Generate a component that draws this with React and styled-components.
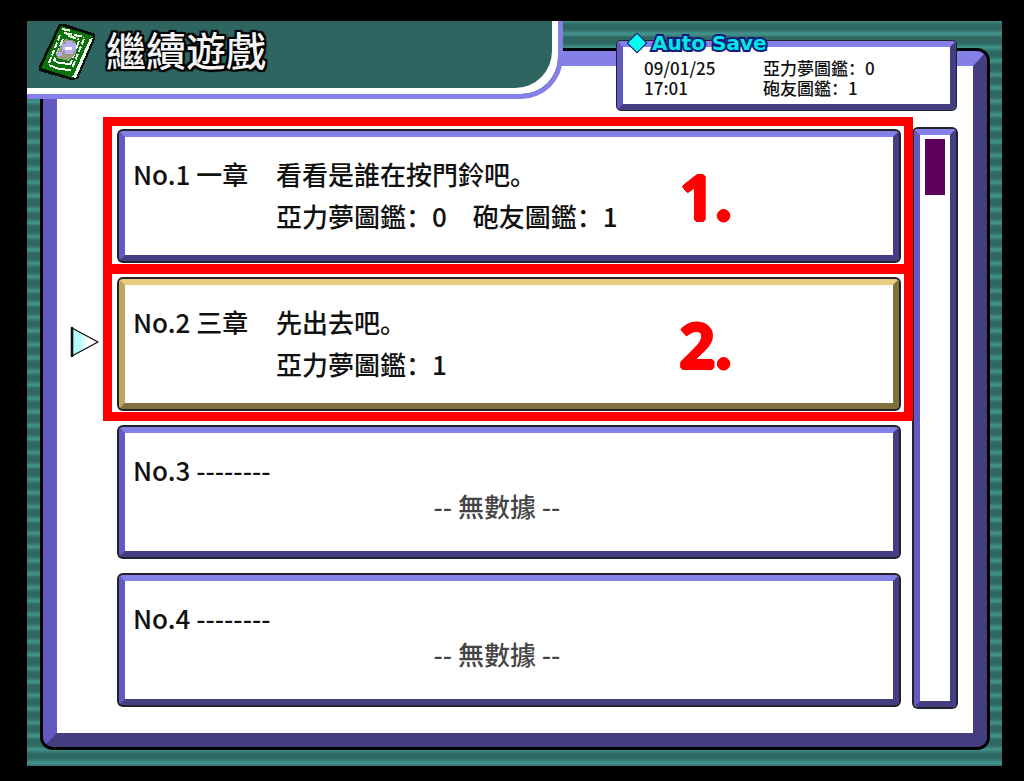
import React from "react";
import styled, { createGlobalStyle, css } from "styled-components";

const saves = [
  {
    no: 1,
    chapter: "一章",
    line: "看看是誰在按門鈴吧。",
    counts: "亞力夢圖鑑：0　砲友圖鑑：1",
    mark: "1.",
  },
  {
    no: 2,
    chapter: "三章",
    line: "先出去吧。",
    counts: "亞力夢圖鑑：1",
    mark: "2.",
    selected: true,
  },
  { no: 3 },
  { no: 4 },
];

const BookIcon = () => (
  <svg width="56" height="58" viewBox="0 0 56 58" shapeRendering="crispEdges" aria-hidden="true">
    <path d="M20 1 L26 1 L56 11 L56 16 L39 56 L32 57 L0 48 L0 43 Z" fill="#061006" />
    <path d="M22 3 L54 13 L34 55 L2 45 Z" fill="#0c720c" />
    <path d="M50 16 L54 15 L37 55 L33 54 Z" fill="#f2f8f2" />
    <path d="M50 15 L33 53" stroke="#0c720c" strokeWidth="2" />
    <path d="M23 6 L33 8 M25 10 L45 14 M29 13 L40 16" stroke="#f2f6e8" strokeWidth="2" strokeDasharray="8 2" />
    <path d="M21 12 L10 40 M45 16 L33 45" stroke="#f2f8f2" strokeWidth="2" strokeDasharray="6 2" />
    <path d="M24 16 L15 38 M40 18 L31 42" stroke="#f2f8f2" strokeWidth="2" strokeDasharray="8 2" />
    <path d="M10 42 L20 46 L32 47 M14 37 L20 40 L31 41" fill="none" stroke="#f2f8f2" strokeWidth="2" />
    <path d="M26 16 L36 18 L37 30 L30 38 L18 35 L17 31 Z" fill="#9a9a7c" />
    <path d="M27 18 h6 v2 h4 v8 h-3 v3 h-8 v-3 h-3 v-7 h4 Z" fill="#b5adf0" />
    <path d="M18 29 h5 v4 h-5 Z" fill="#b5adf0" />
    <path d="M26 24 h7 v3 h-7 Z" fill="#ffffff" />
  </svg>
);

const App = () => {
  return (
    <Page>
      <GlobalStyle />
      <Screen>
        <Panel>
          <SaveList>
            {saves.map((save) => (
              <li key={save.no}>
                <Slot $selected={save.selected}>
                  {save.selected && (
                    <Cursor width="30" height="32" viewBox="0 0 30 32" aria-hidden="true">
                      <defs>
                        <linearGradient id="cursor">
                          <stop offset="0.3" stopColor="#b4fbff" />
                          <stop offset="0.6" stopColor="#ffffff" />
                        </linearGradient>
                      </defs>
                      <path d="M2 2 L28 16 L2 30 Z" fill="url(#cursor)" stroke="#111" strokeWidth="1.4" strokeLinejoin="round" />
                      <path d="M2 2 V30" stroke="#111" strokeWidth="2.6" strokeLinecap="round" />
                    </Cursor>
                  )}
                  <SlotNumber>
                    No.{save.no} {save.chapter || "--------"}
                  </SlotNumber>
                  {save.chapter ? (
                    <Detail>
                      <span>{save.line}</span>
                      <span>{save.counts}</span>
                    </Detail>
                  ) : (
                    <NoData>-- 無數據 --</NoData>
                  )}
                  {save.mark && <Mark>{save.mark}</Mark>}
                </Slot>
              </li>
            ))}
          </SaveList>
          <ScrollTrack>
            <ScrollThumb />
          </ScrollTrack>
        </Panel>
        <Header>
          <BookIcon />
          <Title>繼續遊戲</Title>
        </Header>
        <AutoSave>
          <AutoSaveLabel>
            <svg width="22" height="22" viewBox="0 0 22 22" aria-hidden="true">
              <path d="M11 2 L20 11 L11 20 L2 11 Z" fill="#00ffee" stroke="#151a80" strokeWidth="2.4" strokeLinejoin="round" />
            </svg>
            Auto Save
          </AutoSaveLabel>
          <AutoSaveRow>
            <span>09/01/25</span>
            <span>亞力夢圖鑑：0</span>
          </AutoSaveRow>
          <AutoSaveRow>
            <span>17:01</span>
            <span>砲友圖鑑：1</span>
          </AutoSaveRow>
        </AutoSave>
      </Screen>
    </Page>
  );
};

export default App;

// Styled Components
const GlobalStyle = createGlobalStyle`
  * {
    box-sizing: border-box;
  }

  body {
    margin: 0;
    background: #000;
    font-family: "Noto Sans CJK SC", "Noto Sans CJK TC", sans-serif;
    font-weight: 500;
    color: #111;
  }
`;

// light top, mid left, dark right and bottom
const bevel = css`
  border-style: solid;
  border-color: #8580e8 #423e80 #423e80 #625ac0;
`;

const Page = styled.div`
  display: grid;
  min-height: 100vh;
  padding: 21px 22px 15px 27px;
`;

const Screen = styled.main`
  display: grid;
  background: repeating-linear-gradient(
    #40908a 0px,
    #36776f 2px,
    #2f6762 4px,
    #2f6762 8px,
    #36776f 10px,
    #40908a 12px,
    #40908a 14px,
    #36776f 15px,
    #2f6762 17px,
    #2f6762 22px,
    #36776f 24px,
    #40908a 26px,
    #40908a 27px
  );
`;

const Panel = styled.section`
  ${bevel}
  grid-area: 1 / 1;
  display: grid;
  grid-template-columns: 1fr 46px;
  gap: 11px;
  margin: 30px 15px 19px 16px;
  padding: 61px 15px 24px 60px;
  border-width: 15px 14px 14px;
  border-radius: 10px;
  background: #fff;
  box-shadow: 0 0 0 3px #000;
`;

const SaveList = styled.ul`
  display: grid;
  grid-auto-rows: 1fr;
  gap: 14px;
  margin: 0;
  padding: 2px 0;
  list-style: none;

  li {
    display: grid;
  }
`;

const Slot = styled.button`
  ${bevel}
  position: relative;
  display: grid;
  grid-template-columns: 143px 1fr;
  align-content: start;
  margin: 2px;
  padding: 16px 8px 18px;
  border-width: 6px;
  border-radius: 4px;
  background: #fff;
  box-shadow: 0 0 0 2px #22222c;
  color: inherit;
  font: inherit;
  font-size: 26px;
  line-height: 42px;
  text-align: left;
  cursor: pointer;
  ${(props) =>
    props.$selected && "border-color: #e8cc80 #80703e #80703e #c0a660;"}
`;

const SlotNumber = styled.span`
  white-space: nowrap;
`;

const Detail = styled.span`
  display: grid;
`;

const NoData = styled.span`
  grid-column: 1 / -1;
  padding-right: 24px;
  color: #444;
  line-height: 30px;
  text-align: center;
`;

const Cursor = styled.svg`
  position: absolute;
  top: 41px;
  left: -55px;
`;

const Mark = styled.span`
  position: absolute;
  inset: -20px -20px -18px -22px;
  padding: 22px 172px 0 0;
  border: 9px solid #f00;
  color: #f00;
  font-family: "Noto Sans", sans-serif;
  font-size: 62px;
  font-weight: 600;
  line-height: 96px;
  text-align: right;
  text-shadow: 2px 0 #f00, -2px 0 #f00, 0 2px #f00, 0 -2px #f00, 1px 1px #f00,
    -1px 1px #f00, 1px -1px #f00, -1px -1px #f00;
`;

const ScrollTrack = styled.div`
  ${bevel}
  margin: 2px;
  padding: 4px 5px;
  border-width: 6px;
  border-radius: 4px;
  box-shadow: 0 0 0 2px #22222c;
`;

const ScrollThumb = styled.div`
  height: 56px;
  background: #5c005c;
`;

const Header = styled.header`
  grid-area: 1 / 1;
  place-self: start;
  display: flex;
  align-items: center;
  gap: 11px;
  width: 55%;
  height: 78px;
  padding: 0 0 12px 12px;
  border-right: 5px solid #8580e8;
  border-bottom: 5px solid #8580e8;
  border-bottom-right-radius: 42px;
  background: #2f6560;
  box-shadow: inset -6px -6px #fff;
`;

const Title = styled.h1`
  margin: 0 0 6px;
  color: #f4f4f4;
  font-size: 40px;
  font-weight: 500;
  line-height: 60px;
  text-shadow: 2px 0 #000, -2px 0 #000, 0 2px #000, 0 -2px #000, 2px 2px 1px #000,
    -2px 2px 1px #000, 2px -2px 1px #000, -2px -2px 1px #000;
`;

const AutoSave = styled.section`
  ${bevel}
  grid-area: 1 / 1;
  place-self: start end;
  position: relative;
  width: 339px;
  margin: 20px 46px 0 0;
  padding: 11px 21px 6px;
  border-width: 6px;
  border-radius: 4px;
  background: #fff;
  box-shadow: 0 0 0 1px #22222c;
`;

const AutoSaveLabel = styled.h2`
  position: absolute;
  top: -16px;
  left: 3px;
  display: flex;
  align-items: center;
  gap: 4px;
  margin: 0;
  color: #00e8e0;
  font-family: "DejaVu Sans", sans-serif;
  font-size: 20px;
  font-weight: 700;
  line-height: 24px;
  white-space: nowrap;
  -webkit-text-stroke: 4px #151a80;
  paint-order: stroke fill;
`;

const AutoSaveRow = styled.div`
  display: grid;
  grid-template-columns: 119px 1fr;
  font-size: 17px;
  line-height: 20px;
`;
